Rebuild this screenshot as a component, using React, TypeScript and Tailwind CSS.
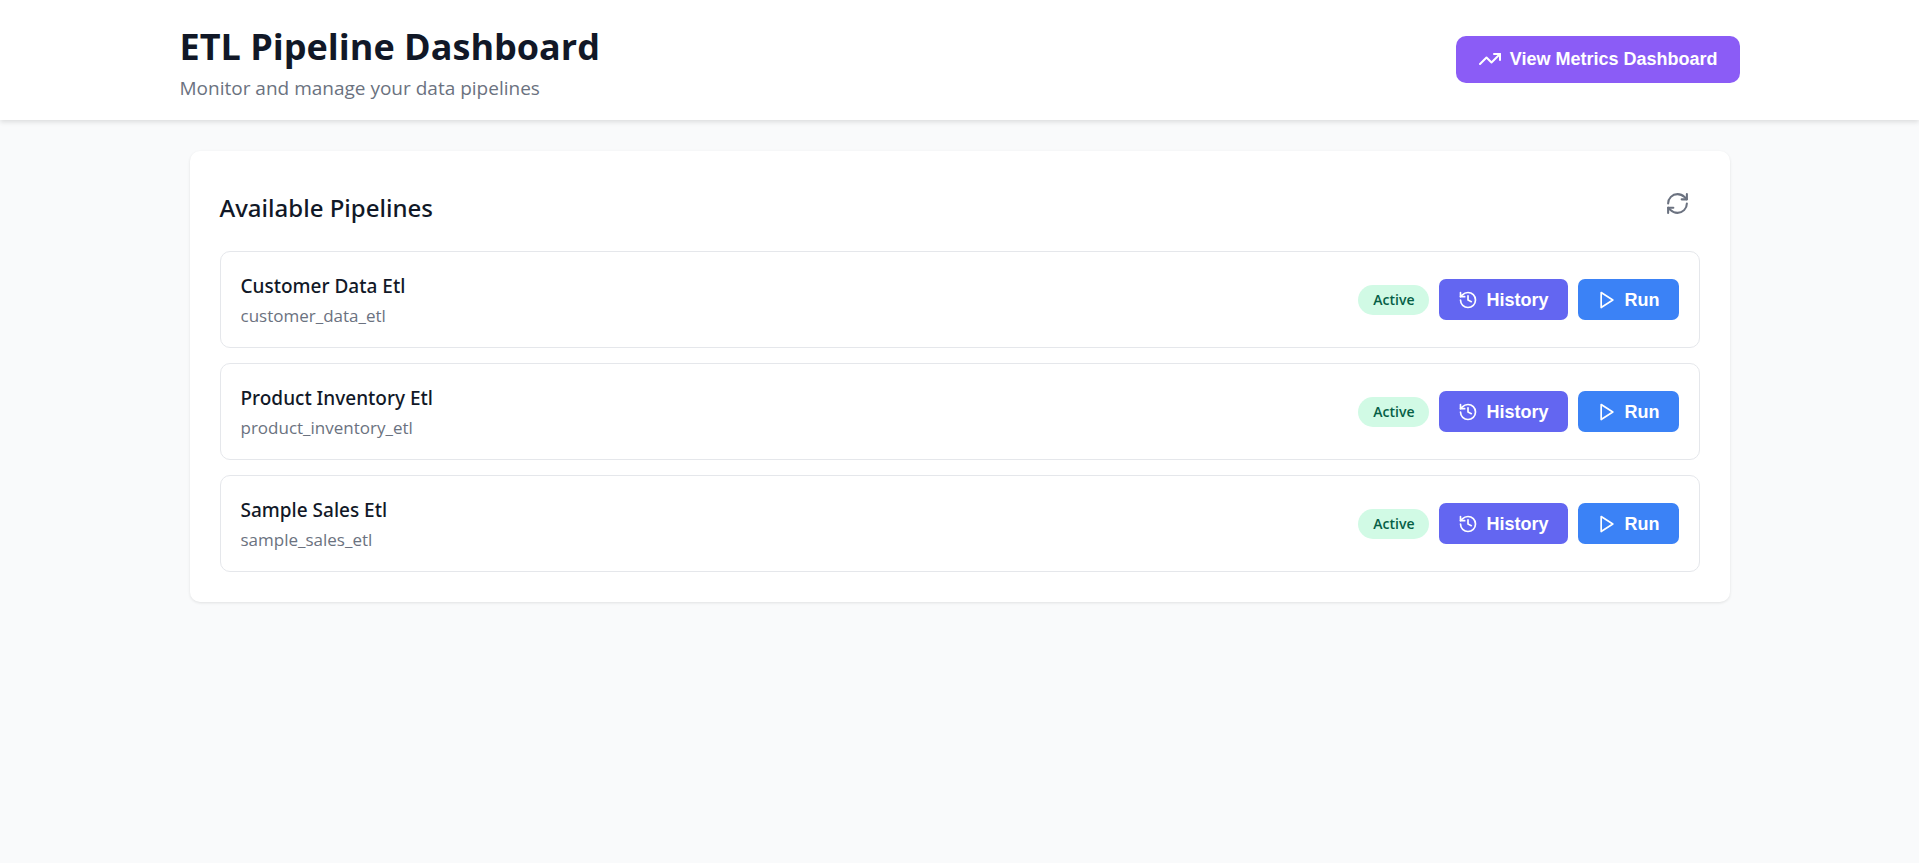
import React from "react";
import { History, RefreshCw, TrendingUp } from "lucide-react";
import { FiPlay } from "react-icons/fi";

const pipelines = [
  { name: "Customer Data Etl", id: "customer_data_etl" },
  { name: "Product Inventory Etl", id: "product_inventory_etl" },
  { name: "Sample Sales Etl", id: "sample_sales_etl" },
];

const buttonBase =
  "flex cursor-pointer items-center gap-2 font-['Liberation_Sans',Arial,sans-serif] text-[18px] leading-[22px] font-semibold text-white";

export default function App() {
  return (
    <div className="min-h-screen bg-[#f9fafb] font-['Open_Sans','Noto_Sans',sans-serif] text-[#111827]">
      <header className="bg-white shadow-[0_2px_5px_rgba(0,0,0,0.12)]">
        <div className="mx-auto flex max-w-[1600px] items-center justify-between px-5 pt-[18px] pb-5">
          <div>
            <h1 className="pt-1 text-[36px] leading-[50px] font-bold">ETL Pipeline Dashboard</h1>
            <p className="pt-1 text-[19px] leading-6 text-[#6b7280]">Monitor and manage your data pipelines</p>
          </div>
          <button type="button" className={`${buttonBase} h-[47px] rounded-[10px] bg-[#8b5cf6] px-[22px]`}>
            <TrendingUp size={24} strokeWidth={2} aria-hidden="true" />
            View Metrics Dashboard
          </button>
        </div>
      </header>

      <main className="mx-auto max-w-[1600px] px-[30px] py-[31px]">
        <section className="rounded-[10px] bg-white p-[30px] shadow-[0_1px_3px_rgba(0,0,0,0.1)]">
          <div className="mb-5 flex items-start justify-between">
            <h2 className="pt-1 font-['Noto_Sans',sans-serif] text-[24px] leading-[46px] font-medium">
              Available Pipelines
            </h2>
            <button type="button" aria-label="Refresh pipelines" className="cursor-pointer p-[10px] text-[#6b7280]">
              <RefreshCw size={25} strokeWidth={2} aria-hidden="true" />
            </button>
          </div>
          <ul className="flex flex-col gap-[15px]">
            {pipelines.map((pipeline) => (
              <li
                key={pipeline.id}
                className="flex items-center justify-between rounded-[10px] border border-[#e5e7eb] p-5"
              >
                <div>
                  <h3 className="font-['Noto_Sans',sans-serif] text-[19px] leading-[29px] font-medium">
                    {pipeline.name}
                  </h3>
                  <p className="pt-1 text-[17px] leading-[22px] text-[#6b7280]">{pipeline.id}</p>
                </div>
                <div className="flex items-center gap-[10px]">
                  <span className="rounded-full bg-[#d1fae5] px-[15px] text-[14px] leading-[30px] font-semibold text-[#065f46]">
                    Active
                  </span>
                  <button type="button" className={`${buttonBase} h-[41px] rounded-[7px] bg-[#6366f1] px-[19px]`}>
                    <History size={20} strokeWidth={2} aria-hidden="true" />
                    History
                  </button>
                  <button type="button" className={`${buttonBase} h-[41px] rounded-[7px] bg-[#3b82f6] px-[19px]`}>
                    <FiPlay size={20} aria-hidden="true" />
                    Run
                  </button>
                </div>
              </li>
            ))}
          </ul>
        </section>
      </main>
    </div>
  );
}
